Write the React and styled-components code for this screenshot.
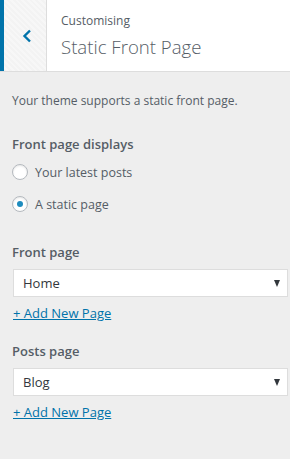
import React from 'react'
import styled, { createGlobalStyle } from 'styled-components'

const GlobalStyle = createGlobalStyle`
  html, body {
    margin: 0;
    padding: 0;
    background: #eeeeee;
  }
  body {
    font-family: "Open Sans", "Noto Sans", sans-serif;
    color: #555d66;
  }
`

const Panel = styled.div`
  width: 290px;
  height: 459px;
  background: #eeeeee;
  overflow: hidden;
`

const Header = styled.div`
  display: flex;
  height: 71px;
  background: #fff;
  border-bottom: 1px solid #dddddd;
`

const BackButton = styled.button`
  width: 47px;
  flex: none;
  display: flex;
  align-items: center;
  justify-content: center;
  padding: 0 0 0 4px;
  border: 0;
  border-left: 4px solid #0073aa;
  border-right: 1px solid #dddddd;
  background: repeating-linear-gradient(45deg, #f3f3f3 0 2px, #f7f7f7 2px 4px);
  color: #0073aa;
  cursor: pointer;
`

const Titles = styled.div`
  display: flex;
  flex-direction: column;
  padding: 12px 0 0 14px;
`

const Action = styled.span`
  font-size: 12px;
  line-height: 18px;
  color: #555d66;
`

const Title = styled.h3`
  margin: 4px 0 0;
  font-size: 18.6px;
  font-weight: 300;
  line-height: 26px;
  color: #555d66;
`

const Body = styled.div`
  padding: 20px 12px 0;
`

const Description = styled.p`
  margin: 0;
  font-size: 12px;
  line-height: 18px;
  color: #555d66;
`

const Control = styled.div`
  margin-top: ${p => p.gap}px;
`

const Label = styled.div`
  font-size: 13px;
  font-weight: 600;
  line-height: 20px;
  color: #555d66;
`

const RadioGroup = styled.div`
  margin-top: 2px;
`

const RadioRow = styled.label`
  display: flex;
  align-items: center;
  gap: 7px;
  height: 32px;
  font-size: 12.5px;
  color: #555d66;
`

const RadioCircle = styled.span`
  width: 16px;
  height: 16px;
  box-sizing: border-box;
  border: 1px solid #b4b9be;
  border-radius: 50%;
  background: #fff;
  box-shadow: inset 0 1px 2px rgba(0, 0, 0, 0.1);
  display: flex;
  align-items: center;
  justify-content: center;
  &::after {
    content: '';
    display: ${p => (p.checked ? 'block' : 'none')};
    width: 6px;
    height: 6px;
    border-radius: 50%;
    background: #1e8cbe;
  }
`

const Select = styled.div`
  margin: 7px -10px 0 1px;
  height: 28px;
  box-sizing: border-box;
  border: 1px solid #dddddd;
  background: #fff;
  display: flex;
  align-items: center;
  justify-content: space-between;
  padding: 0 7px 0 9px;
  font-size: 13px;
  color: #32373c;
`

const Arrow = styled.span`
  width: 0;
  height: 0;
  border-left: 3.5px solid transparent;
  border-right: 3.5px solid transparent;
  border-top: 7px solid #32373c;
`

const AddLink = styled.a`
  display: block;
  width: fit-content;
  margin: 7px 0 0 1px;
  font-size: 13px;
  line-height: 18px;
  color: #0073aa;
  text-decoration: underline;
`

const Chevron = () => (
  <svg width='10' height='14' viewBox='0 0 10 14'>
    <path d='M8 1.5 L2.5 7 L8 12.5' fill='none' stroke='currentColor' strokeWidth='2.4' />
  </svg>
)

const Dropdown = ({ value }) => (
  <Select>
    <span>{value}</span>
    <Arrow />
  </Select>
)

export default function App () {
  return (
    <Panel>
      <GlobalStyle />
      <Header>
        <BackButton aria-label='Back'>
          <Chevron />
        </BackButton>
        <Titles>
          <Action>Customising</Action>
          <Title>Static Front Page</Title>
        </Titles>
      </Header>
      <Body>
        <Description>Your theme supports a static front page.</Description>
        <Control gap={24}>
          <Label>Front page displays</Label>
          <RadioGroup>
            <RadioRow>
              <RadioCircle />
              Your latest posts
            </RadioRow>
            <RadioRow>
              <RadioCircle checked />
              A static page
            </RadioRow>
          </RadioGroup>
        </Control>
        <Control gap={22}>
          <Label>Front page</Label>
          <Dropdown value='Home' />
          <AddLink href='#'>+ Add New Page</AddLink>
        </Control>
        <Control gap={19}>
          <Label>Posts page</Label>
          <Dropdown value='Blog' />
          <AddLink href='#'>+ Add New Page</AddLink>
        </Control>
      </Body>
    </Panel>
  )
}
